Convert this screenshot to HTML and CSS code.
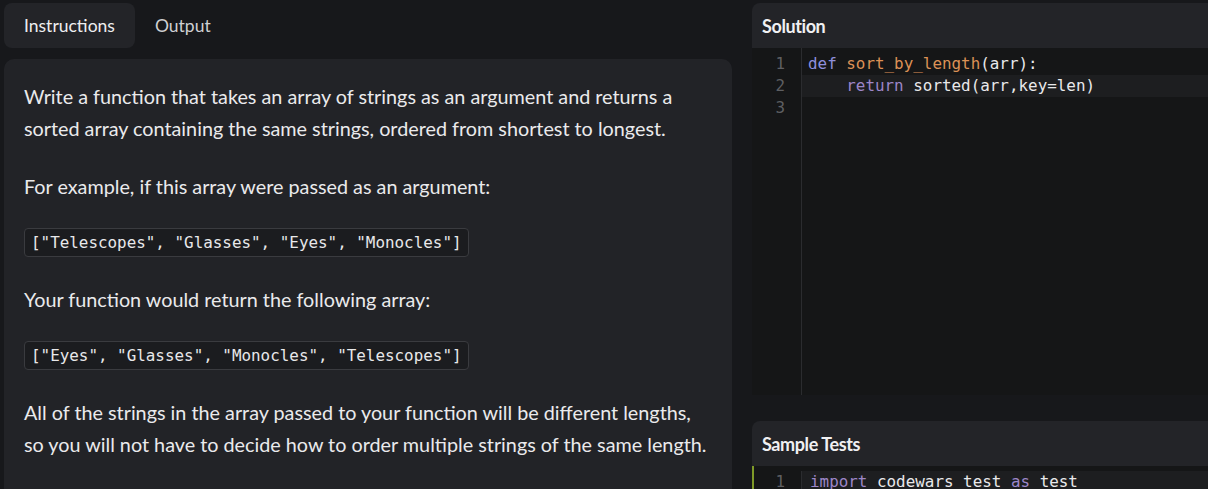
FILE: index.html
```html
<!DOCTYPE html>
<html>
<head>
<meta charset="utf-8">
<link rel="stylesheet" href="styles.css">
</head>
<body>
<div class="layout">
  <section class="left">
    <nav class="tabs">
      <div class="tab active">Instructions</div>
      <div class="tab">Output</div>
    </nav>
    <div class="instructions">
      <p>Write a function that takes an array of strings as an argument and returns a sorted array containing the same strings, ordered from shortest to longest.</p>
      <p>For example, if this array were passed as an argument:</p>
      <code class="snippet">["Telescopes", "Glasses", "Eyes", "Monocles"]</code>
      <p>Your function would return the following array:</p>
      <code class="snippet">["Eyes", "Glasses", "Monocles", "Telescopes"]</code>
      <p>All of the strings in the array passed to your function will be different lengths, so you will not have to decide how to order multiple strings of the same length.</p>
    </div>
  </section>
  <section class="right">
    <div class="panel solution">
      <div class="panel-head">Solution</div>
      <div class="editor">
        <div class="gutter">
          <div class="ln">1</div>
          <div class="ln">2</div>
          <div class="ln">3</div>
        </div>
        <div class="lines">
          <div class="line"><span class="kw">def</span> <span class="fn">sort_by_length</span>(arr):</div>
          <div class="line current">    <span class="kw2">return</span> sorted(arr,key=len)</div>
          <div class="line"> </div>
        </div>
      </div>
    </div>
    <div class="panel tests">
      <div class="panel-head">Sample Tests</div>
      <div class="editor focused">
        <div class="gutter">
          <div class="ln">1</div>
        </div>
        <div class="lines">
          <div class="line current"><span class="kw2">import</span> codewars_test <span class="kw2">as</span> test</div>
        </div>
      </div>
    </div>
  </section>
</div>
</body>
</html>
```
FILE: styles.css
```css
html, body {
  margin: 0;
  padding: 0;
  background: #17181b;
  height: 100%;
  overflow: hidden;
}
body {
  font-family: Lato, "Noto Sans", sans-serif;
  color: #e4e4e6;
}
.layout {
  display: flex;
  gap: 20px;
  height: 489px;
}
.left {
  width: 728px;
  flex-shrink: 0;
  margin-left: 4px;
  display: flex;
  flex-direction: column;
  padding-top: 3px;
  gap: 11px;
}
.tabs {
  display: flex;
  height: 45px;
  flex-shrink: 0;
}
.tab {
  display: flex;
  align-items: center;
  padding: 0 20px;
  font-size: 17.5px;
  color: #cfd0d2;
  border-radius: 8px;
}
.tab.active {
  background: #232428;
  color: #eeeef0;
}
.instructions {
  flex: 1;
  background: #222327;
  border-radius: 10px 10px 0 0;
  padding: 21px 20px 0 20px;
}
.instructions p {
  margin: 0 0 26px 0;
  font-size: 19.8px;
  line-height: 32px;
  color: #eaeaec;
}
.snippet {
  display: block;
  width: fit-content;
  font-family: "DejaVu Sans Mono", monospace;
  font-size: 15.9px;
  line-height: 27px;
  padding: 0 6px;
  background: #1b1c1f;
  border: 1px solid #3a3b3f;
  border-radius: 4px;
  color: #e8e8ea;
  margin: 0 0 26px 0;
  white-space: pre;
}
.right {
  flex: 1;
  display: flex;
  flex-direction: column;
  padding-top: 3px;
  gap: 26px;
}
.panel {
  display: flex;
  flex-direction: column;
  border-radius: 8px 0 0 0;
  overflow: hidden;
}
.solution {
  flex-shrink: 0;
}
.tests {
  flex: 1;
}
.panel-head {
  height: 45px;
  flex-shrink: 0;
  background: #232428;
  display: flex;
  align-items: center;
  padding-left: 10px;
  font-weight: 700;
  font-size: 18px;
  color: #f0f0f2;
  letter-spacing: -0.4px;
}
.editor {
  display: flex;
  background: #151617;
  font-family: "DejaVu Sans Mono", monospace;
  font-size: 15.9px;
}
.solution .editor {
  height: 347px;
}
.tests .editor {
  flex: 1;
  padding-top: 5px;
}
.gutter {
  width: 50px;
  box-sizing: border-box;
  border-right: 1px solid #2b2c2f;
  padding-top: 5px;
}
.tests .gutter {
  padding-top: 0;
}
.editor.focused {
  box-shadow: inset 2px 0 0 #7f9a28;
}
.ln {
  height: 22px;
  line-height: 22px;
  text-align: right;
  padding-right: 16px;
  color: #5e5f62;
}
.lines {
  flex: 1;
  padding-top: 5px;
}
.tests .lines {
  padding-top: 0;
}
.line {
  height: 22px;
  line-height: 22px;
  padding-left: 6px;
  white-space: pre;
  color: #e9e9eb;
}
.tests .line {
  padding-left: 8px;
}
.line.current {
  background: #1d1e20;
}
.kw {
  color: #8f8fdc;
}
.kw2 {
  color: #9c86c8;
}
.fn {
  color: #dc9156;
}
```
